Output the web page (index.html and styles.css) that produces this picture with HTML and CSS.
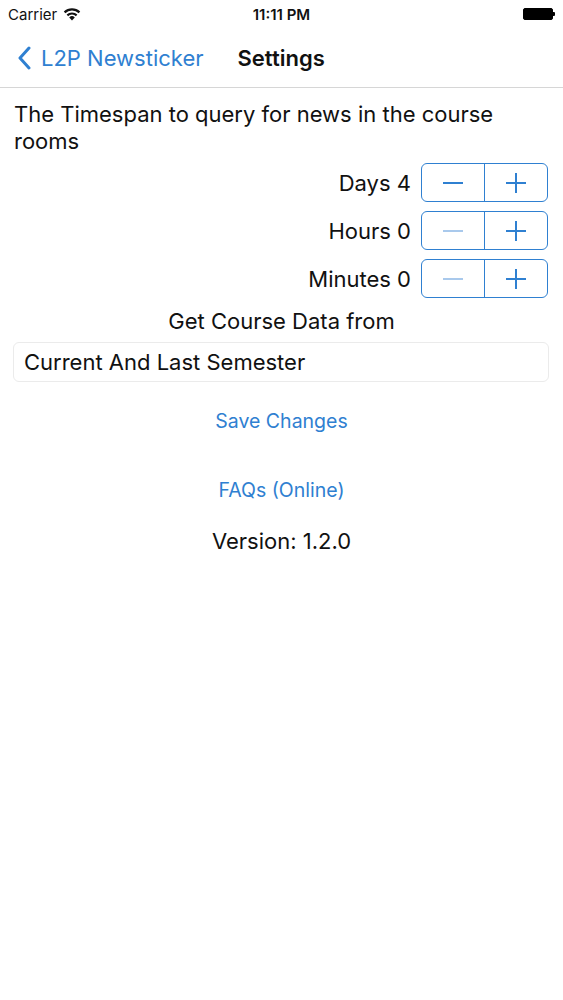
FILE: index.html
```html
<!DOCTYPE html>
<html lang="en">
<head>
    <meta charset="UTF-8">
    <meta name="viewport" content="width=device-width, initial-scale=1.0">
    <title>Settings</title>
    <link rel="stylesheet" href="styles.css">
</head>
<body>
    <!-- Status Bar -->
    <div class="status-bar">
        <div class="carrier">
            Carrier
            <svg class="wifi" width="18" height="13" viewBox="0 0 18 13">
                <path d="M9 12.5 L6.2 9.4 A4 4 0 0 1 11.8 9.4 Z" fill="#111"/>
                <path d="M3.6 6.6 A7.8 7.8 0 0 1 14.4 6.6 L12.9 8.2 A5.6 5.6 0 0 0 5.1 8.2 Z" fill="#111"/>
                <path d="M0.8 3.6 A12 12 0 0 1 17.2 3.6 L15.7 5.2 A9.8 9.8 0 0 0 2.3 5.2 Z" fill="#111"/>
            </svg>
        </div>
        <div class="clock">11:11 PM</div>
        <div class="battery">
            <span class="battery-body"></span>
            <span class="battery-tip"></span>
        </div>
    </div>

    <!-- Navigation Bar -->
    <div class="nav-bar">
        <a href="#" class="back">
            <svg width="14" height="24" viewBox="0 0 14 24">
                <path d="M12 2 L3 12 L12 22" fill="none" stroke="#2f80d1" stroke-width="3" stroke-linecap="round" stroke-linejoin="round"/>
            </svg>
            <span>L2P Newsticker</span>
        </a>
        <div class="nav-title">Settings</div>
    </div>

    <div class="content">
        <p class="intro">The Timespan to query for news in the course rooms</p>

        <!-- Timespan Steppers -->
        <div class="stepper-row">
            <span class="stepper-label">Days 4</span>
            <div class="stepper">
                <button class="step"><svg width="22" height="22" viewBox="0 0 22 22"><path d="M1 11 H21" stroke="currentColor" stroke-width="2"/></svg></button>
                <button class="step"><svg width="22" height="22" viewBox="0 0 22 22"><path d="M1 11 H21 M11 1 V21" stroke="currentColor" stroke-width="2"/></svg></button>
            </div>
        </div>
        <div class="stepper-row">
            <span class="stepper-label">Hours 0</span>
            <div class="stepper">
                <button class="step disabled"><svg width="22" height="22" viewBox="0 0 22 22"><path d="M1 11 H21" stroke="currentColor" stroke-width="2"/></svg></button>
                <button class="step"><svg width="22" height="22" viewBox="0 0 22 22"><path d="M1 11 H21 M11 1 V21" stroke="currentColor" stroke-width="2"/></svg></button>
            </div>
        </div>
        <div class="stepper-row">
            <span class="stepper-label">Minutes 0</span>
            <div class="stepper">
                <button class="step disabled"><svg width="22" height="22" viewBox="0 0 22 22"><path d="M1 11 H21" stroke="currentColor" stroke-width="2"/></svg></button>
                <button class="step"><svg width="22" height="22" viewBox="0 0 22 22"><path d="M1 11 H21 M11 1 V21" stroke="currentColor" stroke-width="2"/></svg></button>
            </div>
        </div>

        <p class="section-label">Get Course Data from</p>
        <div class="picker">Current And Last Semester</div>

        <a href="#" class="link save">Save Changes</a>
        <a href="#" class="link faq">FAQs (Online)</a>
        <p class="version">Version: 1.2.0</p>
    </div>
</body>
</html>
```

FILE: styles.css
```css
body {
    font-family: Inter, "Noto Sans", sans-serif;
    margin: 0;
    padding: 0;
    background-color: #ffffff;
    color: #111;
}

/* Status bar */
.status-bar {
    height: 28px;
    display: flex;
    align-items: center;
    justify-content: space-between;
    padding: 0 8px;
    font-size: 15px;
    position: relative;
}

.carrier {
    display: flex;
    align-items: center;
    gap: 6px;
}

.clock {
    font-weight: 600;
    position: absolute;
    left: 0;
    right: 0;
    text-align: center;
    pointer-events: none;
}

.battery {
    display: flex;
    align-items: center;
}

.battery-body {
    width: 28px;
    height: 10px;
    background-color: #000;
    border: 1px solid #000;
    border-radius: 2px;
}

.battery-tip {
    width: 2px;
    height: 4px;
    background-color: #000;
    border-radius: 0 1px 1px 0;
}

/* Navigation bar */
.nav-bar {
    height: 59px;
    display: flex;
    align-items: center;
    padding-left: 17px;
    border-bottom: 1px solid #d6d6d6;
}

.back {
    display: flex;
    align-items: center;
    gap: 10px;
    color: #2f80d1;
    text-decoration: none;
    font-size: 22px;
}

.nav-title {
    margin-left: 34px;
    font-size: 22px;
    font-weight: 600;
}

/* Content */
.content {
    padding: 13px 14px 0;
}

.intro {
    margin: 0;
    font-size: 22px;
    line-height: 27px;
}

.stepper-row {
    display: flex;
    justify-content: flex-end;
    align-items: center;
    gap: 10px;
    margin-top: 9px;
    padding-right: 1px;
}

.intro + .stepper-row {
    margin-top: 8px;
}

.stepper-label {
    font-size: 22px;
}

.stepper {
    display: flex;
    width: 125px;
    height: 37px;
    border: 1px solid #2f80d1;
    border-radius: 6px;
    overflow: hidden;
}

.step {
    flex: 1;
    display: flex;
    align-items: center;
    justify-content: center;
    border: none;
    background: none;
    color: #2f80d1;
    padding: 0;
}

.step + .step {
    border-left: 1px solid #2f80d1;
}

.step.disabled {
    color: #a9c9ec;
}

.section-label {
    margin: 10px 0 0;
    font-size: 22px;
    line-height: 27px;
    text-align: center;
}

.picker {
    margin-top: 7px;
    height: 40px;
    box-sizing: border-box;
    margin-left: -1px;
    padding: 0 10px;
    display: flex;
    align-items: center;
    border: 1px solid #ebebeb;
    border-radius: 6px;
    font-size: 22px;
}

.link {
    display: block;
    text-align: center;
    color: #2f80d1;
    text-decoration: none;
    font-size: 19.5px;
    line-height: 26px;
}

.save {
    margin-top: 26px;
}

.faq {
    margin-top: 43px;
}

.version {
    margin: 25px 0 0;
    text-align: center;
    font-size: 22px;
    line-height: 27px;
}
```
